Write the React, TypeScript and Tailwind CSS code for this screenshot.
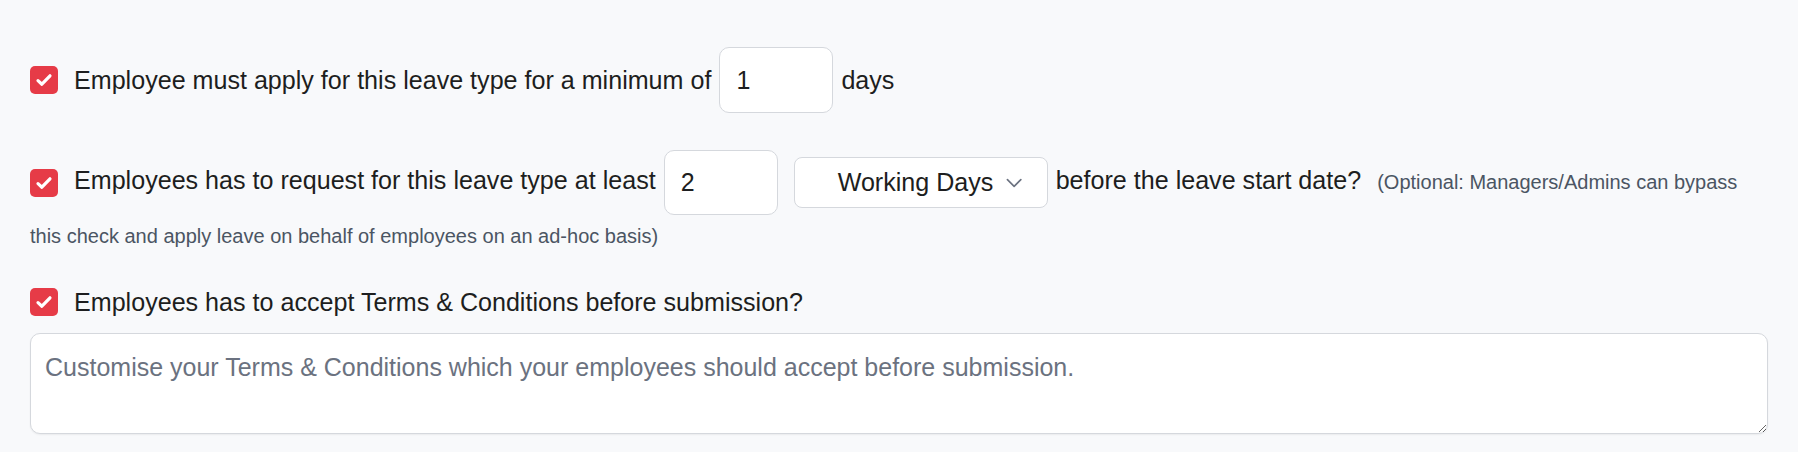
import React from "react";

function Check() {
  return (
    <span className="inline-flex h-[28px] w-[28px] shrink-0 items-center justify-center rounded-[5px] bg-[#e63b47] align-middle">
      <svg width="20" height="20" viewBox="0 0 20 20" fill="none">
        <path d="M4 10.6l3.9 3.6L16 5.8" stroke="#fff" strokeWidth="3.2" strokeLinecap="round" strokeLinejoin="round" />
      </svg>
    </span>
  );
}

export default function App() {
  return (
    <div
      className="h-[452px] w-full bg-[#f8f9fb] px-[30px] pt-[47px] text-[#1d1e20]"
      style={{ fontFamily: '"Liberation Sans", Arial, Helvetica, sans-serif' }}
    >
      {/* Row 1 */}
      <div className="flex items-center text-[25.1px] leading-[38px]">
        <Check />
        <span className="ml-4">Employee must apply for this leave type for a minimum of</span>
        <input
          readOnly
          value="1"
          className="ml-2 h-[66px] w-[114px] rounded-[10px] border border-[#d5d8dd] bg-white px-4 text-[25px] text-[#1d1e20] outline-none"
        />
        <span className="ml-2">days</span>
      </div>

      {/* Row 2 */}
      <div className="mt-[37px] text-[25.1px] leading-[38px]">
        <span className="mr-4 inline-flex align-middle">
          <Check />
        </span>
        Employees has to request for this leave type at least
        <input
          readOnly
          value="2"
          className="ml-2 inline-block h-[65px] w-[114px] rounded-[10px] border border-[#d5d8dd] bg-white px-4 align-middle text-[25px] leading-normal text-[#1d1e20] outline-none"
        />
        <span className="ml-4 mr-2 inline-flex h-[51px] w-[254px] items-center rounded-[8px] border border-[#d5d8dd] bg-white pl-[43px] pr-[24px] align-middle leading-none">
          <span className="whitespace-nowrap">Working Days</span>
          <svg className="ml-[13px]" width="17" height="10" viewBox="0 0 17 10" fill="none">
            <path d="M1.5 1.5l7 7 7-7" stroke="#6b7280" strokeWidth="1.7" strokeLinecap="round" strokeLinejoin="round" />
          </svg>
        </span>
        before the leave start date?
        <span className="ml-4 text-[20px] text-[#4b5563]">
          (Optional: Managers/Admins can bypass this check and apply leave on behalf of employees on an ad-hoc basis)
        </span>
      </div>

      {/* Row 3 */}
      <div className="mt-[28px] flex items-center text-[25.1px] leading-[38px]">
        <Check />
        <span className="ml-4">Employees has to accept Terms &amp; Conditions before submission?</span>
      </div>

      <textarea
        placeholder="Customise your Terms & Conditions which your employees should accept before submission."
        className="mt-3 block h-[101px] w-full rounded-[10px] border border-[#d5d8dd] bg-white px-[14px] py-[14px] text-[25px] leading-[38px] text-[#1d1e20] shadow-[0_1px_2px_rgba(0,0,0,0.06)] outline-none placeholder:text-[#6b7280]"
      />
    </div>
  );
}
